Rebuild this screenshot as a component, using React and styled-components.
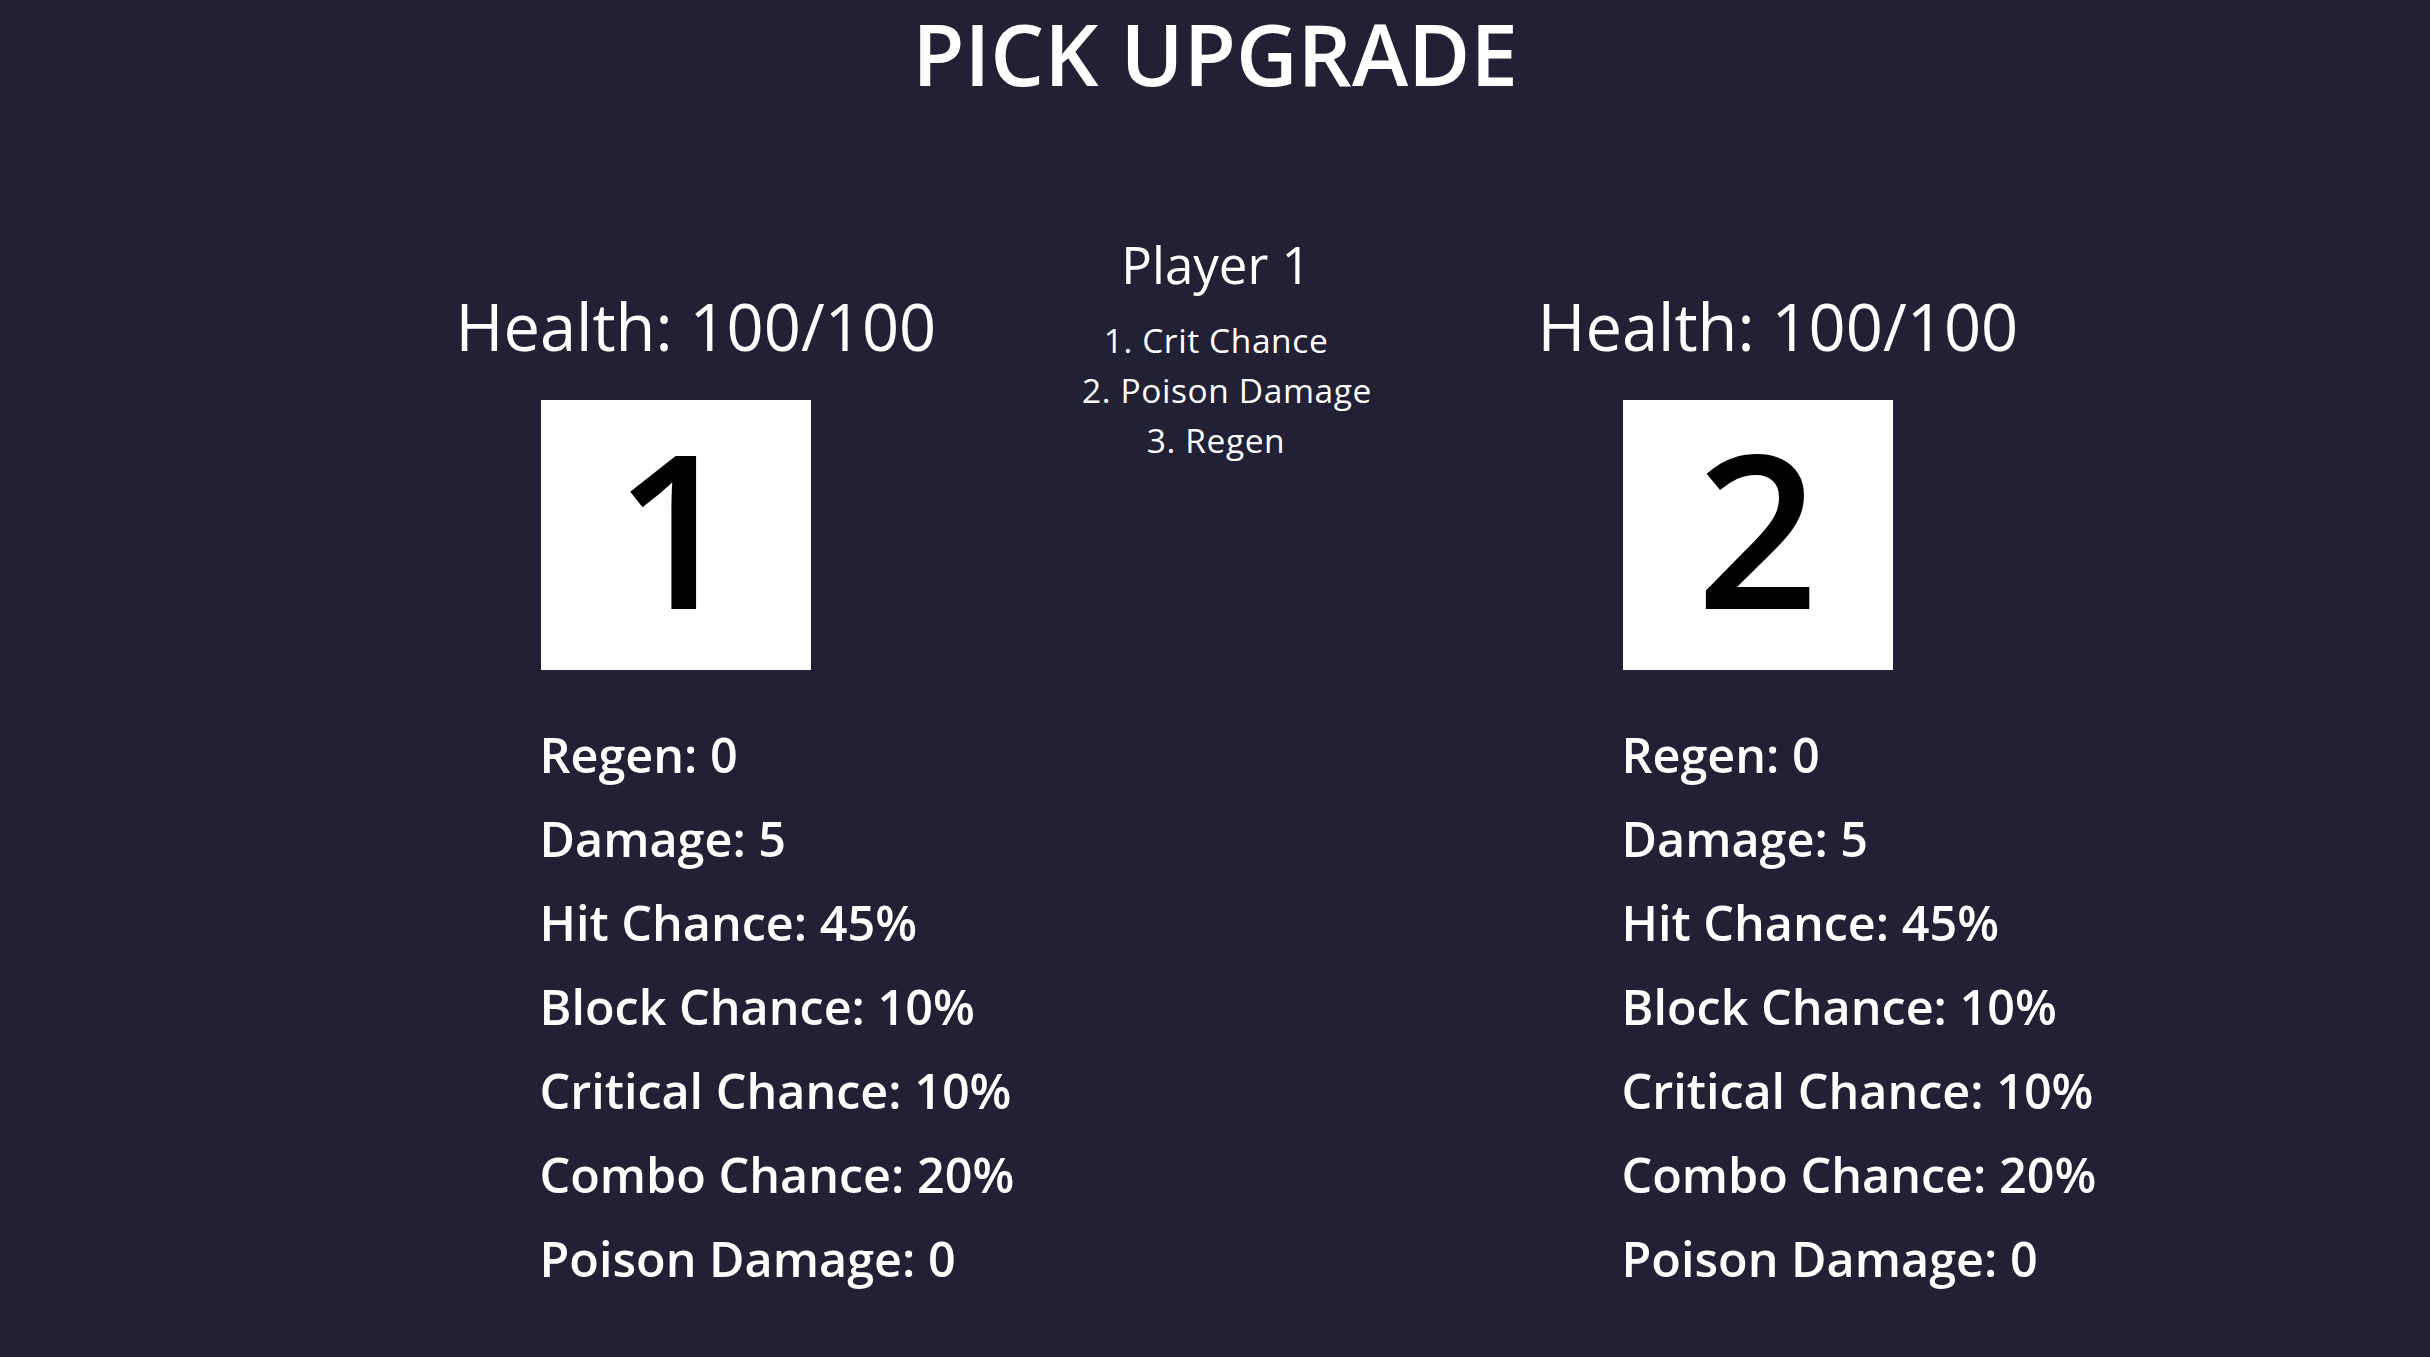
import styled, { createGlobalStyle } from "styled-components";

const GlobalStyle = createGlobalStyle`
  html, body {
    margin: 0;
    padding: 0;
    background: #222035;
  }
  body {
    font-family: "Open Sans", "Noto Sans", sans-serif;
    color: #ffffff;
  }
`;

const players = [
  { id: 1, health: "100/100" },
  { id: 2, health: "100/100" },
];

const stats = [
  ["Regen", "0"],
  ["Damage", "5"],
  ["Hit Chance", "45%"],
  ["Block Chance", "10%"],
  ["Critical Chance", "10%"],
  ["Combo Chance", "20%"],
  ["Poison Damage", "0"],
];

// the second line sits a little right of centre in the game's menu
const upgrades = [
  { name: "Crit Chance", indent: 0 },
  { name: "Poison Damage", indent: 22 },
  { name: "Regen", indent: 0 },
];

function PlayerCard({ player }) {
  return (
    <Column>
      <Health>Health: {player.health}</Health>
      <Portrait>{player.id}</Portrait>
      <StatList>
        {stats.map(([label, value]) => (
          <Stat key={label}>
            {label}: {value}
          </Stat>
        ))}
      </StatList>
    </Column>
  );
}

export default function App() {
  return (
    <Page>
      <GlobalStyle />
      <Title>PICK UPGRADE</Title>
      <Board>
        <PlayerCard player={players[0]} />
        <Center>
          <Turn>Player 1</Turn>
          <Options>
            {upgrades.map((u, i) => (
              <Option key={u.name} $indent={u.indent}>
                {i + 1}. {u.name}
              </Option>
            ))}
          </Options>
        </Center>
        <PlayerCard player={players[1]} />
      </Board>
    </Page>
  );
}

const Page = styled.div`
  width: 100%;
  min-height: 100vh;
  display: flex;
  flex-direction: column;
  align-items: center;
`;

const Title = styled.h1`
  margin: 0;
  font-size: 85px;
  font-weight: 600;
  line-height: 1.25;
`;

const Board = styled.div`
  margin-top: 123px;
  display: grid;
  grid-template-columns: repeat(3, 427px);
  column-gap: 114px;
  justify-content: center;
  padding-left: 2px;
`;

const Column = styled.div`
  display: flex;
  flex-direction: column;
  align-items: flex-start;
  padding-top: 53px;
  white-space: nowrap;
`;

const Health = styled.div`
  margin-left: -6px;
  font-size: 65px;
  font-weight: 400;
`;

const Portrait = styled.div`
  margin: 30px 0 0 79px;
  width: 270px;
  height: 270px;
  background: #ffffff;
  color: #000000;
  font-size: 214px;
  font-weight: 600;
  line-height: 252px;
  text-align: center;
`;

const StatList = styled.ul`
  list-style: none;
  margin: 42px 0 0 78px;
  padding: 0;
`;

const Stat = styled.li`
  font-size: 48.5px;
  font-weight: 600;
  line-height: 84px;
`;

const Center = styled.div`
  display: flex;
  flex-direction: column;
  align-items: center;
  white-space: nowrap;
`;

const Turn = styled.div`
  font-size: 51px;
  font-weight: 500;
`;

const Options = styled.ol`
  list-style: none;
  margin: 16px 0 0;
  padding: 0;
  text-align: center;
`;

const Option = styled.li`
  padding-left: ${(p) => p.$indent}px;
  font-size: 33.5px;
  font-weight: 500;
  line-height: 50px;
  letter-spacing: 0.6px;
`;
